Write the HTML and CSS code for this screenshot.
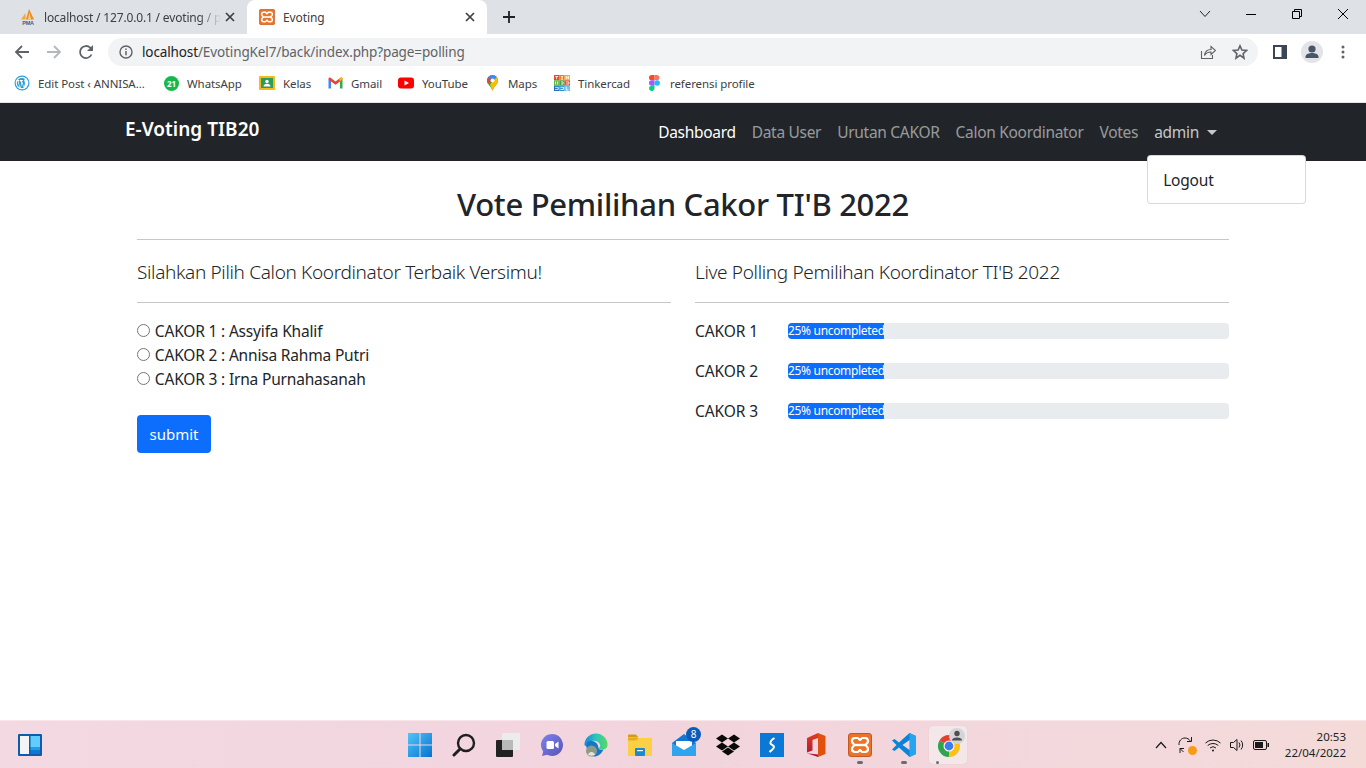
FILE: index.html
```html
<!DOCTYPE html>
<html lang="id">
<head>
<meta charset="utf-8">
<title>Evoting</title>
<link rel="stylesheet" href="styles.css">
</head>
<body>
<svg class="defs" width="0" height="0" aria-hidden="true">
  <defs>
    <symbol id="xampp" viewBox="0 0 24 24">
      <rect x="0.5" y="0.5" width="23" height="23" rx="2.5" fill="#ec7428" stroke="#c4591f"/>
      <path d="M7 5h2.500c1.500 0 1.500 2 2.500 2s1-2 2.500-2H17c2 0 3 1.500 3 3.200 0 1.800-1.500 2.300-2.500 3.800 1 1.500 2.500 2 2.500 3.800 0 1.700-1 3.200-3 3.200h-2.500c-1.500 0-1.500-2-2.500-2s-1 2-2.500 2H7c-2 0-3-1.500-3-3.200 0-1.800 1.500-2.300 2.500-3.800C5.500 10.500 4 10 4 8.200 4 6.500 5 5 7 5z" fill="none" stroke="#fff" stroke-width="2.200"/>
      <path d="M6.500 12h11" stroke="#fff" stroke-width="2.400"/>
    </symbol>
    <linearGradient id="winblue" x1="0" y1="0" x2="1" y2="1">
      <stop offset="0" stop-color="#52c5f8"/>
      <stop offset="1" stop-color="#0672cf"/>
    </linearGradient>
    <linearGradient id="teamsg" x1="0" y1="0" x2="1" y2="1">
      <stop offset="0" stop-color="#7b83eb"/>
      <stop offset="1" stop-color="#5a52b8"/>
    </linearGradient>
    <linearGradient id="edgeg" x1="0" y1="0" x2="1" y2="0">
      <stop offset="0" stop-color="#1a86d8"/>
      <stop offset="0.5" stop-color="#2cc6b8"/>
      <stop offset="1" stop-color="#5ad860"/>
    </linearGradient>
    <linearGradient id="officeg" x1="0" y1="0" x2="0" y2="1">
      <stop offset="0" stop-color="#e0401c"/>
      <stop offset="1" stop-color="#a8123f"/>
    </linearGradient>
  </defs>
</svg>

<div class="browser">
  <div class="tabstrip">
    <div class="tab tab-inactive">
      <svg class="favicon" viewBox="0 0 16 16">
        <path d="M1 10.500 5.500 4v6.500z" fill="#f6a733"/>
        <path d="M6 10.500 9 0l5 10.500z" fill="#ee8b1e"/>
        <path d="M8 10.500l1.500-7 1.500 7z" fill="#fbd38d"/>
        <text class="pma" x="8" y="15.500" text-anchor="middle">PMA</text>
      </svg>
      <span class="tab-title tab-title-faded">localhost / 127.0.0.1 / evoting / p</span>
      <svg class="tab-close" viewBox="0 0 10 10"><path d="M1 1l8 8M9 1 1 9" stroke="#3c4043" stroke-width="1.700"/></svg>
    </div>
    <div class="tab tab-active">
      <svg class="favicon"><use href="#xampp"/></svg>
      <span class="tab-title">Evoting</span>
      <svg class="tab-close" viewBox="0 0 10 10"><path d="M1 1l8 8M9 1 1 9" stroke="#3c4043" stroke-width="1.700"/></svg>
    </div>
    <svg class="newtab" viewBox="0 0 12 12"><path d="M6 0v12M0 6h12" stroke="#202124" stroke-width="1.800"/></svg>
    <div class="window-controls">
      <svg class="wc" viewBox="0 0 46 20"><path d="M18 7l5 5.500L28 7" fill="none" stroke="#202124"/></svg>
      <svg class="wc" viewBox="0 0 46 20"><path d="M18 10.500h10" stroke="#000"/></svg>
      <svg class="wc" viewBox="0 0 46 20"><path d="M18.500 7.500h7v7h-7zM20.500 7.500v-2h7v7h-2" fill="none" stroke="#000"/></svg>
      <svg class="wc" viewBox="0 0 46 20"><path d="M18 5l10 10M28 5 18 15" stroke="#000"/></svg>
    </div>
  </div>

  <div class="toolbar">
    <div class="nav-buttons">
      <svg class="tb-icon" viewBox="0 0 16 16"><path d="M15 8H2M8 2 2 8l6 6" fill="none" stroke="#5f6368" stroke-width="1.800"/></svg>
      <svg class="tb-icon" viewBox="0 0 16 16"><path d="M1 8h13M8 2l6 6-6 6" fill="none" stroke="#b4b7bb" stroke-width="1.800"/></svg>
      <svg class="tb-icon" viewBox="0 0 16 16"><path d="M13.500 10.500A6 6 0 1 1 12.200 3.700L14.500 6" fill="none" stroke="#5f6368" stroke-width="1.800"/><path d="M15 1v6H9z" fill="#5f6368"/></svg>
    </div>
    <div class="omnibox">
      <svg class="info-icon" viewBox="0 0 14 14"><circle cx="7" cy="7" r="6" fill="none" stroke="#5f6368" stroke-width="1.400"/><path d="M7 6v4.200M7 3.500v1.400" stroke="#5f6368" stroke-width="1.500"/></svg>
      <span class="url"><span class="url-host">localhost</span>/EvotingKel7/back/index.php?page=polling</span>
      <svg class="omni-icon" viewBox="0 0 16 16"><path d="M1.500 7v7.500h11V11" fill="none" stroke="#5f6368" stroke-width="1.100"/><path d="M4.500 11.500c.5-4 3-6 6.500-6V2.500L15.500 6.500 11 10.500V8C8.500 8 6 9 4.500 11.500z" fill="none" stroke="#5f6368" stroke-width="1.100"/></svg>
      <svg class="omni-icon" viewBox="0 0 16 16"><path d="M8 1.800l1.900 4.200 4.600.5-3.400 3.100.9 4.500L8 11.300l-4 2.800.9-4.500L1.500 6.500 6.100 6z" fill="none" stroke="#5f6368" stroke-width="1.600"/></svg>
    </div>
    <div class="tb-right">
      <svg class="panel-icon" viewBox="0 0 14 14"><path fill-rule="evenodd" d="M0 0h14v14H0zM2 2v10h6.500V2z" fill="#3c4555"/></svg>
      <span class="avatar"><svg viewBox="0 0 22 22"><circle cx="11" cy="8" r="3.600" fill="#4a5568"/><path d="M4.500 17v-1.500c0-2.500 4-3.500 6.500-3.500s6.500 1 6.500 3.500V17z" fill="#4a5568"/></svg></span>
      <svg class="dots" viewBox="0 0 4 14"><circle cx="2" cy="2" r="1.500" fill="#5f6368"/><circle cx="2" cy="7" r="1.500" fill="#5f6368"/><circle cx="2" cy="12" r="1.500" fill="#5f6368"/></svg>
    </div>
  </div>

  <div class="bookmarks">
    <div class="bm">
      <svg class="bm-icon" viewBox="0 0 16 16"><circle cx="8" cy="8" r="7.500" fill="#2a9fd6"/><circle cx="8" cy="8" r="6.300" fill="#fff"/><path d="M2.800 8c0 2 1.200 3.800 3 4.700L3.300 5.800A5.200 5.200 0 0 0 2.800 8zM8.100 8.500l-1.500 4.400a5.200 5.200 0 0 0 3.200-.1zM11.400 4.300c-.7-.1-1.200.4-1.200 1 0 .8 1.300 2.200.5 4.500l-.7 2.300-2-6h.9V5H5.600v1.100h.8l1 3-1.300 3.500-1.700-6.500H5V5H3.700a5.200 5.200 0 0 1 7.700-.7z" fill="#2a9fd6"/></svg>
      <span>Edit Post ‹ ANNISA...</span>
    </div>
    <div class="bm">
      <span class="wa-badge">21</span>
      <span>WhatsApp</span>
    </div>
    <div class="bm">
      <svg class="bm-icon" viewBox="0 0 16 16"><rect y="1" width="16" height="14" rx="1" fill="#f5ba15"/><rect x="2" y="3" width="12" height="10" fill="#2a9d5c"/><circle cx="8" cy="6.500" r="1.700" fill="#fff"/><path d="M4.500 11.500c0-2 2-2.700 3.500-2.700s3.500.7 3.500 2.700z" fill="#fff"/></svg>
      <span>Kelas</span>
    </div>
    <div class="bm">
      <svg class="bm-icon-narrow" viewBox="1 0 14 16"><path d="M1 13.500V4l2.500.5v9z" fill="#4285f4"/><path d="M15 13.500V4l-2.500.5v9z" fill="#34a853"/><path d="M1 4c0-1.300 1.400-1.800 2.300-1.100L8 6.500l4.700-3.600C13.600 2.200 15 2.700 15 4l-2.500 2.500L8 9.700 3.500 6.500z" fill="#ea4335"/><path d="M12.500 6.500 15 4c0-1.300-1.400-1.800-2.300-1.100L11.500 3.800z" fill="#fbbc04"/></svg>
      <span>Gmail</span>
    </div>
    <div class="bm">
      <svg class="bm-icon" viewBox="0 0 16 16"><rect y="2.500" width="16" height="11" rx="3" fill="#f00"/><path d="M6.500 5.500v5L11 8z" fill="#fff"/></svg>
      <span>YouTube</span>
    </div>
    <div class="bm">
      <svg class="bm-icon-narrow" viewBox="1.500 0 13 16"><path d="M8 0a5.500 5.500 0 0 0-5.500 5.500C2.500 9.500 6.500 11 8 16c1.500-5 5.500-6.500 5.500-10.500A5.500 5.500 0 0 0 8 0z" fill="#34a853"/><path d="M8 0a5.500 5.500 0 0 0-4.200 2L8 5.500 12.200 2A5.500 5.500 0 0 0 8 0z" fill="#4285f4"/><path d="M3.800 2a5.500 5.500 0 0 0-1.300 3.500c0 1 .3 1.900.7 2.700L8 5.500z" fill="#ea4335"/><path d="M12.200 2 5.500 9.500 8 16c1.500-5 5.500-6.500 5.500-10.500 0-1.300-.5-2.500-1.300-3.500z" fill="#fbbc04"/><circle cx="8" cy="5.500" r="2" fill="#fff"/></svg>
      <span>Maps</span>
    </div>
    <div class="bm">
      <svg class="bm-icon" viewBox="0 0 15 15"><rect width="5" height="5" fill="#e8432c"/><rect x="5" width="5" height="5" fill="#f37c20"/><rect x="10" width="5" height="5" fill="#f9b11d"/><rect y="5" width="5" height="5" fill="#5db644"/><rect x="5" y="5" width="5" height="5" fill="#3f9f4a"/><rect x="10" y="5" width="5" height="5" fill="#e8432c"/><rect y="10" width="5" height="5" fill="#1c6fb8"/><rect x="5" y="10" width="5" height="5" fill="#2b93d1"/><rect x="10" y="10" width="5" height="5" fill="#74bfe8"/><path d="M1 1.500h3M2.500 1.500v2.500M6.500 1.500h2M7.500 1.500v2.500M6.500 4h2M11.500 1v3M13.500 1v3M11.500 2.500h2M1.500 6v3M3.500 6v3M6.500 6.500h2v2h-2M11 6.500h3v2h-3M1 11.500h3v2H1M6 11.500h3v2H6M11.500 11v3h2" stroke="#fff" stroke-width=".8" fill="none"/></svg>
      <span>Tinkercad</span>
    </div>
    <div class="bm bm-figma">
      <svg class="bm-icon-figma" viewBox="0 0 11 16"><path d="M0 2.700A2.700 2.700 0 0 1 2.700 0h2.800v5.300H2.700A2.700 2.700 0 0 1 0 2.700z" fill="#f24e1e"/><path d="M5.500 0h2.800a2.700 2.700 0 0 1 0 5.300H5.500z" fill="#ff7262"/><path d="M0 8a2.700 2.700 0 0 1 2.700-2.700h2.800v5.400H2.700A2.700 2.700 0 0 1 0 8z" fill="#a259ff"/><circle cx="8.200" cy="8" r="2.700" fill="#1abcfe"/><path d="M0 13.300a2.700 2.700 0 0 1 2.700-2.600h2.800v2.600a2.700 2.700 0 0 1-5.500 0z" fill="#0acf83"/></svg>
      <span>referensi profile</span>
    </div>
  </div>
</div>

<div class="app">
  <nav class="navbar">
    <a class="brand">E-Voting TIB20</a>
    <ul class="nav-list">
      <li class="nav-item nav-current">Dashboard</li>
      <li class="nav-item">Data User</li>
      <li class="nav-item">Urutan CAKOR</li>
      <li class="nav-item">Calon Koordinator</li>
      <li class="nav-item">Votes</li>
      <li class="nav-item nav-open">admin<span class="caret"></span>
        <div class="dropdown">Logout</div>
      </li>
    </ul>
  </nav>

  <main class="content">
    <h1 class="title">Vote Pemilihan Cakor TI'B 2022</h1>
    <hr class="rule">
    <div class="columns">
      <section>
        <h4 class="section-title">Silahkan Pilih Calon Koordinator Terbaik Versimu!</h4>
        <hr class="rule rule-section">
        <form class="vote-form">
          <label class="choice"><input type="radio" name="cakor"> CAKOR 1 : Assyifa Khalif</label>
          <label class="choice"><input type="radio" name="cakor"> CAKOR 2 : Annisa Rahma Putri</label>
          <label class="choice"><input type="radio" name="cakor"> CAKOR 3 : Irna Purnahasanah</label>
          <button class="submit" type="button">submit</button>
        </form>
      </section>
      <section>
        <h4 class="section-title">Live Polling Pemilihan Koordinator TI'B 2022</h4>
        <hr class="rule rule-section">
        <div class="poll">
          <div class="poll-row"><span class="poll-label">CAKOR 1</span><div class="progress"><div class="progress-bar" style="width:96px">25% uncompleted</div></div></div>
          <div class="poll-row"><span class="poll-label">CAKOR 2</span><div class="progress"><div class="progress-bar" style="width:96px">25% uncompleted</div></div></div>
          <div class="poll-row"><span class="poll-label">CAKOR 3</span><div class="progress"><div class="progress-bar" style="width:96px">25% uncompleted</div></div></div>
        </div>
      </section>
    </div>
  </main>
</div>

<footer class="taskbar">
  <div class="tb-left">
    <svg class="task-icon" viewBox="0 0 24 24"><rect width="24" height="22" y="1" rx="1" fill="#0f5cab"/><rect x="2" y="3" width="9" height="18" fill="#f4f4f4"/><rect x="12.500" y="3" width="9.500" height="11" fill="#62cdfc"/><rect x="12.500" y="14" width="9.500" height="3.500" fill="#1f9bf0"/><rect x="12.500" y="17.500" width="9.500" height="3.500" fill="#0a78d8"/></svg>
  </div>
  <div class="tb-center">
    <svg class="task-icon" viewBox="0 0 24 24"><path d="M0 0h11.500v11.500H0zM12.500 0H24v11.500H12.500zM0 12.500h11.500V24H0zM12.500 12.500H24V24H12.500z" fill="url(#winblue)"/></svg>
    <svg class="task-icon" viewBox="0 0 24 24"><circle cx="14" cy="10" r="8" fill="none" stroke="#1f1f1f" stroke-width="2.400"/><path d="M8 16l-6 6" stroke="#1f1f1f" stroke-width="3" stroke-linecap="round"/></svg>
    <svg class="task-icon" viewBox="0 0 24 24"><rect y="7" width="17" height="17" rx="1" fill="#222"/><rect x="6" y="0" width="18" height="17" rx="1" fill="#ececec"/><rect x="6" y="7" width="11" height="10" fill="#b9b9b9"/></svg>
    <svg class="task-icon" viewBox="0 0 24 24"><path d="M12 1a11 11 0 1 1-5 20.800L2 23l1.200-4.500A11 11 0 0 1 12 1z" fill="url(#teamsg)"/><rect x="6.500" y="8" width="7.500" height="8" rx="1.500" fill="#fff"/><path d="M15 11l3.500-2.500v7L15 13z" fill="#fff"/></svg>
    <svg class="task-icon" viewBox="0 0 24 24"><path d="M0.500 12a11.500 11.500 0 0 1 23 0c0 3-2.500 4.500-5 4.500-2 0-3.500-.5-3.500-1.500 1-1 1.500-2 1-3.500C15 8.500 11 7 8 8c-3.500 1.200-5 3.500-5 6z" fill="url(#edgeg)"/><path d="M2.500 14c-1-4 2.500-7 5.500-6 4 .8 6 3 6.500 7 .5 2 3 2 5 1.500-2 4.500-6 7-9 7-3.500 0-6.500-3-8-9.500z" fill="#1478c8"/><circle cx="7.500" cy="18" r="5.500" fill="#8a9c86"/><path d="M4 21.500c1-3.500 6-3.500 7 0-1.500 1.500-5.500 1.500-7 0z" fill="#e8e4dc"/></svg>
    <svg class="task-icon" viewBox="0 0 24 24"><path d="M0 2.500A1 1 0 0 1 1 1.500h7l2.500 3H0z" fill="#d79a12"/><path d="M0 5h24v17a1 1 0 0 1-1 1H1a1 1 0 0 1-1-1z" fill="#fbd044"/><path d="M0 5h10.500L8 7.500H0z" fill="#e5ac1c"/><rect x="7" y="15" width="10" height="8" rx="1" fill="#1a8ad0"/><rect x="9" y="17" width="6" height="1.200" fill="#fff"/></svg>
    <span class="mail">
      <svg class="task-icon" viewBox="0 0 24 24"><path d="M0 10 12 1l12 9v13H0z" fill="#1079d6"/><path d="M4 8h16v7l-8 4-8-4z" fill="#fff"/><path d="M0 10l12 7 12-7v13H0z" fill="#30a4ee"/></svg>
      <span class="mail-badge">8</span>
    </span>
    <svg class="task-icon" viewBox="0 0 24 24"><path d="M6 1.500l6 4-6 4-6-4zM18 1.500l6 4-6 4-6-4zM6 9.500l6 4-6 4-6-4zM18 9.500l6 4-6 4-6-4zM12 14.500l6 4-6 4-6-4z" fill="#0a0a0a"/></svg>
    <svg class="task-icon" viewBox="0 0 24 24"><rect width="24" height="24" fill="#0a78d4"/><path d="M14.500 5c-2.500 1.500-4.500 3.500-4 5.500.4 1.500 3.500 1.500 3.500 3.500 0 1.500-2 3-4.500 5" fill="none" stroke="#fff" stroke-width="2"/></svg>
    <svg class="task-icon" viewBox="0 0 24 24"><path d="M14 0 3 5v14.500L8.500 17.500V7L14 5v16.500L3 20.200 14 24z" fill="url(#officeg)"/><path d="M14 0 21.500 3v18L14 24z" fill="#e2500f"/></svg>
    <span class="running">
      <svg class="task-icon"><use href="#xampp"/></svg>
      <span class="run-dot"></span>
    </span>
    <span class="running">
      <svg class="task-icon" viewBox="0 0 24 24"><path d="M17.500 0 24 3v18l-6.500 3L7 14.500 2.500 18 0 16.500 4.500 12 0 7.500 2.500 6 7 9.500z" fill="#0a84d6"/><path d="M17.500 0 24 3v18l-6.500 3z" fill="#27a4ef"/><path d="M17.500 7 10.500 12l7 5z" fill="#f4d6e0"/></svg>
      <span class="run-dot"></span>
    </span>
    <span class="chrome-tile">
      <svg class="chrome-icon" viewBox="0 0 24 24"><path d="M12 12 21.530 6.500A11 11 0 0 0 2.470 6.500z" fill="#e3412f"/><path d="M12 12 2.470 6.500A11 11 0 0 0 12 23z" fill="#2fa44f"/><path d="M12 12 12 23A11 11 0 0 0 21.530 6.500z" fill="#fbc116"/><circle cx="12" cy="12" r="5.500" fill="#fff"/><circle cx="12" cy="12" r="4.400" fill="#3b7df0"/></svg>
      <svg class="chrome-badge" viewBox="0 0 16 16"><circle cx="8" cy="8" r="8" fill="#d5d5d9"/><circle cx="8" cy="5.500" r="2.700" fill="#4f4f4f"/><path d="M3 12.500c0-2.300 3-3 5-3s5 .7 5 3z" fill="#4f4f4f"/></svg>
      <span class="tile-dot"></span>
    </span>
  </div>
  <div class="tb-tray">
    <svg class="tray-chev" viewBox="0 0 12 8"><path d="M1 7l5-5.500L11 7" fill="none" stroke="#1a1a1a" stroke-width="1.200"/></svg>
    <span class="sync">
      <svg class="sync-icon" viewBox="0 0 18 18"><path d="M2 9c-.3-4.200 2.500-7 6-7 2.300 0 4 1 5.200 2.800" fill="none" stroke="#1a1a1a"/><path d="M14.500 1v4.500H10M3 17v-4.500h4M3 12.500l3.500 3.500" fill="none" stroke="#1a1a1a"/></svg>
      <span class="sync-dot"></span>
    </span>
    <svg class="tray-icon" viewBox="0 0 16 16"><path d="M.5 6a11 11 0 0 1 15 0M2.700 8.500a8 8 0 0 1 10.600 0M5 11a4.500 4.500 0 0 1 6 0" fill="none" stroke="#1a1a1a"/><circle cx="8" cy="13.500" r="1" fill="#1a1a1a"/></svg>
    <svg class="tray-icon" viewBox="0 0 16 16"><path d="M1.500 5.500h3L8 2.500v11l-3.500-3h-3zM10 5.500a4 4 0 0 1 0 5M12 3.500a7 7 0 0 1 0 9" fill="none" stroke="#1a1a1a"/></svg>
    <svg class="tray-icon" viewBox="0 0 16 16"><rect x=".5" y="3.500" width="13" height="9" rx="1.500" fill="none" stroke="#1a1a1a"/><rect x="2" y="5" width="8" height="6" fill="#1a1a1a"/><rect x="14.500" y="6" width="1.500" height="4" fill="#1a1a1a"/></svg>
    <div class="clock"><span>20:53</span><span>22/04/2022</span></div>
  </div>
</footer>
</body>
</html>
```
FILE: styles.css
```css
* { box-sizing: border-box; }
html, body { margin: 0; padding: 0; }
body {
  width: 1366px;
  height: 768px;
  overflow: hidden;
  display: flex;
  flex-direction: column;
  background: #fff;
  color: #212529;
  font-family: "Noto Sans", "Open Sans", sans-serif;
  font-size: 16px;
}
.defs { position: absolute; }
svg { display: block; flex: none; }

/* Browser chrome */
.browser { flex: none; height: 103px; display: flex; flex-direction: column; background: #fff; border-bottom: 1px solid #e4e6e9; }
.tabstrip { height: 34px; background: #dee1e6; display: flex; align-items: flex-end; padding-left: 8px; }
.tab { height: 34px; width: 239px; display: flex; align-items: center; padding: 0 12px; font-size: 12px; color: #3c4043; letter-spacing: -0.1px; }
.tab-inactive { width: 239px; letter-spacing: -0.17px; }
.tab-active { width: 240px; background: #fff; border-radius: 8px 8px 0 0; color: #3c4043; }
.favicon { width: 16px; height: 16px; margin-right: 8px; }
.pma { font-family: "Liberation Sans", sans-serif; font-size: 5.500px; font-weight: 700; fill: #3f5f8c; }
.tab-title { flex: 1; white-space: nowrap; overflow: hidden; }
.tab-title-faded { -webkit-mask-image: linear-gradient(90deg, #000 155px, transparent 177px); mask-image: linear-gradient(90deg, #000 155px, transparent 177px); }
.tab-close { width: 10px; height: 10px; margin-left: 4px; }
.newtab { width: 12px; height: 12px; margin: 0 0 11px 16px; }
.window-controls { margin-left: auto; display: flex; height: 34px; padding-top: 4px; }
.wc { width: 46px; height: 20px; }

.toolbar { height: 32px; display: flex; align-items: flex-end; padding-left: 14px; }
.nav-buttons { display: flex; gap: 16px; height: 28px; align-items: center; }
.tb-icon { width: 16px; height: 16px; }
.omnibox { margin-left: 14px; width: 1150px; height: 28px; background: #f1f3f4; border-radius: 14px; display: flex; align-items: center; padding: 0 10px 0 11px; }
.info-icon { width: 14px; height: 14px; margin-right: 9px; }
.url { flex: 1; font-size: 13.500px; color: #5f6368; letter-spacing: -0.12px; }
.url-host { color: #202124; }
.omni-icon { width: 16px; height: 16px; margin-left: 16px; }
.tb-right { display: flex; height: 28px; align-items: center; padding-left: 15px; }
.panel-icon { width: 14px; height: 14px; }
.avatar { width: 22px; height: 22px; border-radius: 50%; background: #e2e4e8; margin-left: 14px; }
.avatar svg { width: 22px; height: 22px; }
.dots { width: 4px; height: 14px; margin-left: 18px; }

.bookmarks { flex: 1; display: grid; grid-template-columns: 150px 95px 69px 70px 87px 69px 95px auto; padding: 0 0 2px 14px; align-items: center; font-size: 11.500px; color: #3c4043; letter-spacing: -0.08px; }
.bm { display: flex; align-items: center; gap: 8px; white-space: nowrap; }
.bm-icon { width: 16px; height: 16px; }
.bm-icon-narrow { width: 15px; height: 16px; }
.bm-icon-figma { width: 11px; height: 16px; margin-right: 2px; }
.wa-badge { width: 15px; height: 15px; border-radius: 50%; background: #16b84d; color: #fff; font-size: 8px; font-weight: 700; display: flex; align-items: center; justify-content: center; letter-spacing: 0; }

/* App */
.app { flex: 1; display: flex; flex-direction: column; min-height: 0; }
.navbar { height: 58px; flex: none; background: #212529; display: flex; align-items: center; justify-content: space-between; padding: 0 149px 0 125px; }
.brand { font-size: 19px; font-weight: 600; color: #fff; letter-spacing: 0.02px; margin-top: -6px; }
.nav-list { list-style: none; margin: 0; padding: 0; display: flex; gap: 16px; font-size: 15.500px; letter-spacing: -0.3px; color: rgba(255,255,255,.55); }
.nav-item { position: relative; white-space: nowrap; display: flex; align-items: center; }
.nav-current { color: #fff; }
.nav-open { color: rgba(255,255,255,.75); }
.caret { width: 0; height: 0; margin-left: 8px; border-top: 5px solid currentColor; border-left: 5px solid transparent; border-right: 5px solid transparent; }
.dropdown { position: absolute; top: 34px; left: -7px; width: 159px; height: 49px; padding: 13px 15px; background: #fff; color: #212529; border: 1px solid rgba(0,0,0,.15); border-radius: 4px; z-index: 2; letter-spacing: -0.2px; }

.content { flex: 1; padding: 24px 137px 0; }
.title { margin: 0; font-size: 31px; font-weight: 500; line-height: 38px; text-align: center; letter-spacing: -0.3px; color: #212529; }
.rule { border: 0; height: 1px; margin: 16px 0 0; background: #c6c7c9; }
.columns { display: grid; grid-template-columns: 1fr 1fr; gap: 24px; padding-top: 20px; }
.section-title { margin: 0; font-size: 19px; font-weight: 300; line-height: 24px; letter-spacing: -0.34px; color: #212529; }
.rule-section { margin-top: 18px; }
.vote-form { display: flex; flex-direction: column; align-items: flex-start; padding-top: 16px; font-size: 15.500px; letter-spacing: -0.18px; }
.choice { line-height: 24px; display: block; }
.choice input { margin: 0 1px 0 0; width: 13px; height: 13px; }
.submit { margin-top: 24px; width: 74px; height: 38px; padding: 0; background: #0d6efd; color: #fff; border: 0; border-radius: 4px; font: inherit; font-size: 15px; }
.poll { padding-top: 17px; display: flex; flex-direction: column; gap: 24px; }
.poll-row { display: grid; grid-template-columns: 93px 1fr; align-items: center; height: 16px; font-size: 15.500px; letter-spacing: -0.1px; }
.progress { height: 16px; background: #e9ecef; border-radius: 4px; overflow: hidden; }
.progress-bar { height: 16px; background: #0d6efd; color: #fff; font-size: 12px; line-height: 16px; white-space: nowrap; text-align: center; letter-spacing: -0.32px; overflow: hidden; }

/* Taskbar */
.taskbar { flex: none; height: 48px; border-top: 1px solid #f8e6ea; background: linear-gradient(90deg, #f3d9e2 0%, #f2d4dd 50%, #f3d9dc 85%, #f4dbd8 100%); display: grid; grid-template-columns: 1fr auto 1fr; align-items: center; }
.tb-left { padding-left: 18px; }
.tb-center { display: flex; gap: 20px; align-items: center; padding-left: 2px; }
.task-icon { width: 24px; height: 24px; }
.mail, .running { position: relative; display: block; width: 24px; height: 24px; }
.mail-badge { position: absolute; top: -6px; right: -5px; width: 15px; height: 15px; border-radius: 50%; background: #0b5cb8; color: #fff; font-size: 10px; line-height: 15px; text-align: center; }
.run-dot { position: absolute; left: 9px; bottom: -7px; width: 6px; height: 3px; border-radius: 2px; background: #6c6a70; }
.chrome-tile { position: relative; width: 38px; height: 38px; margin: 0 -7px; background: #f4e7ea; border-radius: 4px; display: flex; align-items: center; justify-content: center; box-shadow: 0 0 1px rgba(0,0,0,.15); }
.chrome-icon { width: 24px; height: 24px; margin: 3px 0 0 2px; }
.chrome-badge { position: absolute; top: 2px; right: 2px; width: 16px; height: 16px; }
.tile-dot { position: absolute; left: 7px; bottom: 0; width: 3px; height: 3px; border-radius: 50%; background: #6c6a70; }
.tb-tray { display: flex; align-items: center; justify-content: flex-end; padding-right: 20px; gap: 8px; }
.tray-chev { width: 12px; height: 8px; margin-right: 2px; }
.tray-icon { width: 16px; height: 16px; }
.sync { position: relative; width: 18px; height: 18px; margin-right: 2px; }
.sync-icon { width: 18px; height: 18px; }
.sync-dot { position: absolute; right: -2px; bottom: -1px; width: 9px; height: 9px; border-radius: 50%; background: #f99b16; }
.clock { display: flex; flex-direction: column; align-items: flex-end; margin-left: 8px; font-size: 11.500px; line-height: 16px; color: #1f1f1f; }
```
